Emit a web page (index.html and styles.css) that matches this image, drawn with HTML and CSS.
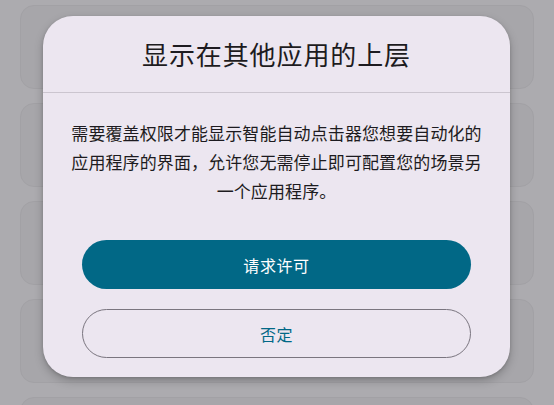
FILE: index.html
```html
<!DOCTYPE html>
<html lang="zh">
<head>
<meta charset="utf-8">
<link rel="stylesheet" href="styles.css">
</head>
<body>
<div class="list">
  <div class="card"></div>
  <div class="card"></div>
  <div class="card"></div>
  <div class="card"></div>
  <div class="card"></div>
</div>
<div class="dialog">
  <div class="header">显示在其他应用的上层</div>
  <div class="body">需要覆盖权限才能显示智能自动点击器您想要自动化的应用程序的界面，允许您无需停止即可配置您的场景另一个应用程序。</div>
  <div class="actions">
    <button class="btn primary">请求许可</button>
    <button class="btn outline">否定</button>
  </div>
</div>
</body>
</html>
```

FILE: styles.css
```css
html, body {
  margin: 0;
  padding: 0;
  width: 554px;
  height: 405px;
  overflow: hidden;
  background: #acabaf;
  font-family: "Noto Sans CJK SC", "Noto Sans", sans-serif;
}
.list {
  display: flex;
  flex-direction: column;
  gap: 14px;
  padding: 5px 20px 0 20px;
  height: 405px;
  box-sizing: border-box;
  overflow: hidden;
}
.card {
  height: 82px;
  flex: none;
  border-radius: 14px;
  background: #a7a6aa;
  border: 1px solid #a2a1a5;
}
.dialog {
  position: absolute;
  left: 43px;
  top: 16px;
  width: 467px;
  height: 361px;
  box-sizing: border-box;
  background: #ece6f0;
  border-radius: 30px;
  box-shadow: 0 4px 10px rgba(0, 0, 0, 0.22), 0 1px 3px rgba(0, 0, 0, 0.15);
  display: flex;
  flex-direction: column;
}
.header {
  padding: 20px 0 21px;
  line-height: 35px;
  font-size: 26px;
  letter-spacing: 0.9px;
  text-align: center;
  color: #1d1b20;
  border-bottom: 1px solid #cbc5cf;
}
.body {
  padding: 25px 27px 0;
  font-size: 17px;
  letter-spacing: 0.1px;
  line-height: 29px;
  text-align: center;
  color: #1d1b20;
}
.actions {
  display: flex;
  flex-direction: column;
  gap: 20px;
  padding: 35px 39px 0;
}
.btn {
  height: 49px;
  border-radius: 25px;
  font-family: "Noto Sans CJK SC", "Noto Sans", sans-serif;
  font-size: 16px;
  letter-spacing: 0.6px;
  box-sizing: border-box;
  cursor: pointer;
}
.primary {
  background: #016886;
  color: #ffffff;
  border: none;
}
.outline {
  background: transparent;
  color: #016886;
  border: 1px solid #7a757f;
}
```
